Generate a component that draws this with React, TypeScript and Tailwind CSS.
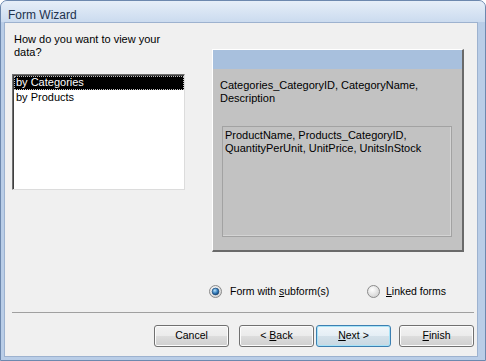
import React from 'react';

const font = { fontFamily: '"Liberation Sans", Arial, sans-serif' };

function Radio({ checked }: { checked?: boolean }) {
  return (
    <svg width="13" height="13" viewBox="0 0 13 13" className="shrink-0">
      <defs>
        <radialGradient id={checked ? 'rfa' : 'rfb'} cx="40%" cy="35%" r="70%">
          <stop offset="0" stopColor="#ffffff" />
          <stop offset="1" stopColor="#d0d0d0" />
        </radialGradient>
        <radialGradient id="rdot" cx="40%" cy="35%" r="70%">
          <stop offset="0" stopColor="#b8e2fb" />
          <stop offset="0.6" stopColor="#2f78b8" />
          <stop offset="1" stopColor="#173f6a" />
        </radialGradient>
      </defs>
      <circle cx="6.5" cy="6.5" r="6" fill={checked ? 'url(#rfa)' : 'url(#rfb)'} stroke="#8a8a8a" />
      {checked && <circle cx="6.5" cy="6.5" r="3.4" fill="url(#rdot)" stroke="#1e4a78" strokeWidth="0.7" />}
    </svg>
  );
}

function Btn({ children, primary }: { children: React.ReactNode; primary?: boolean }) {
  return (
    <button
      className={`w-[75px] h-[22px] rounded-[3px] border text-[10.5px] text-black flex items-center justify-center ${
        primary
          ? 'border-[#3c7fb1] bg-[linear-gradient(#f0f6fa_0%,#e4eef5_50%,#d3e1ea_51%,#c8d8e2_100%)] shadow-[inset_0_0_0_1px_#a8e3f7]'
          : 'border-[#707070] bg-[linear-gradient(#f2f2f2_0%,#ebebeb_50%,#dddddd_51%,#cfcfcf_100%)] shadow-[inset_0_0_0_1px_#fcfcfc]'
      }`}
    >
      <span>{children}</span>
    </button>
  );
}

export default function App() {
  return (
    <div className="w-[486px] h-[361px] overflow-hidden bg-white" style={font}>
      <div className="w-full h-full flex flex-col rounded-t-[7px] bg-[#b9cde7] border border-[#6d88ae]">
        {/* Title bar */}
        <div className="h-[21px] shrink-0 pl-[7px] pt-[7px] text-[12px] leading-[14px] text-[#22324d] rounded-t-[6px] bg-[linear-gradient(#e6eef8,#cbdbef)]">
          Form Wizard
        </div>

        {/* Dialog body */}
        <div className="flex-1 ml-[3px] mr-[7px] mb-[3px] bg-[#f0f0f0] border border-[#9db2cf] flex flex-col pt-[10px] text-[11px] text-black">
          <div className="flex items-start">
            {/* Left column */}
            <div className="w-[207px] pl-[7px] shrink-0">
              <div className="ml-[2px] w-[160px] leading-[13px]">How do you want to view your data?</div>
              <div className="mt-[15px] w-[173px] h-[116px] bg-white border-t border-l border-[#707070] border-r border-b border-r-[#dcdcdc] border-b-[#dcdcdc] shadow-[inset_1px_1px_0_#404040]">
                <div className="ml-px mt-px h-[14px] leading-[13px] pl-[2px] bg-black text-white outline-1 outline-dotted outline-[#c0c0c0] -outline-offset-1">
                  by Categories
                </div>
                <div className="ml-px h-[14px] leading-[14px] pl-[2px]">by Products</div>
              </div>
            </div>

            {/* Preview panel */}
            <div className="mt-[16px] w-[252px] h-[203px] bg-[#c2c2c2] border-t border-l border-white border-r-2 border-b-2 border-r-[#6a6a6a] border-b-[#6a6a6a] flex flex-col">
              <div className="h-[19px] bg-[#a8c0dd]" />
              <div className="pl-[7px] pt-[10px] leading-[13px] w-[240px]">
                Categories_CategoryID, CategoryName, Description
              </div>
              <div className="mt-[21px] ml-[9px] w-[230px] h-[111px] border border-[#a2a2a2] shadow-[inset_-1px_-1px_0_#d4d4d4] px-[2px] pt-[2px] leading-[13px]">
                ProductName, Products_CategoryID, QuantityPerUnit, UnitPrice, UnitsInStock
              </div>
            </div>
          </div>

          {/* Radios */}
          <div className="mt-[33px] pl-[204px] flex items-center h-[13px] text-[10.5px]">
            <div className="w-[158px] flex items-center gap-[8px]">
              <Radio checked />
              <span>
                Form with <span className="underline">s</span>ubform(s)
              </span>
            </div>
            <div className="flex items-center gap-[6px]">
              <Radio />
              <span>
                <span className="underline">L</span>inked forms
              </span>
            </div>
          </div>

          {/* Separator */}
          <div className="mt-[14px] ml-[7px] w-[462px] h-px bg-[#a0a0a0]" />

          {/* Buttons */}
          <div className="mt-[12px] pl-[149px] flex items-center">
            <Btn>Cancel</Btn>
            <div className="ml-[10px]">
              <Btn>
                {'< '}<span className="underline">B</span>ack
              </Btn>
            </div>
            <div className="ml-[2px]">
              <Btn primary>
                <span className="underline">N</span>ext {'>'}
              </Btn>
            </div>
            <div className="ml-[8px]">
              <Btn>
                <span className="underline">F</span>inish
              </Btn>
            </div>
          </div>
        </div>
      </div>
    </div>
  );
}
